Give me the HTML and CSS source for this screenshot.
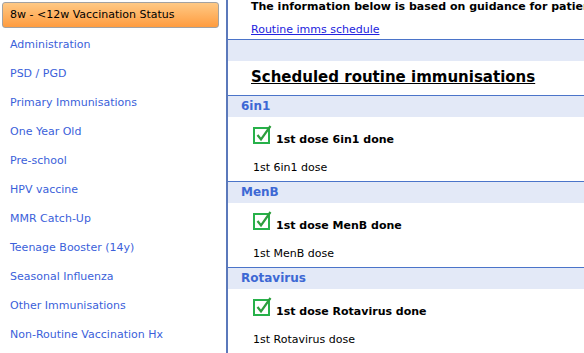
FILE: index.html
```html
<!DOCTYPE html>
<html>
<head>
    <title>Vaccination Status</title>
    <link rel="stylesheet" href="styles.css">
</head>
<body>

<div class="screen">

<div class="nav">
    <div class="nav-current">8w - &lt;12w Vaccination Status</div>
    <a class="nav-item" href="#">Administration</a>
    <a class="nav-item" href="#">PSD / PGD</a>
    <a class="nav-item" href="#">Primary Immunisations</a>
    <a class="nav-item" href="#">One Year Old</a>
    <a class="nav-item" href="#">Pre-school</a>
    <a class="nav-item" href="#">HPV vaccine</a>
    <a class="nav-item" href="#">MMR Catch-Up</a>
    <a class="nav-item" href="#">Teenage Booster (14y)</a>
    <a class="nav-item" href="#">Seasonal Influenza</a>
    <a class="nav-item" href="#">Other Immunisations</a>
    <a class="nav-item" href="#">Non-Routine Vaccination Hx</a>
</div>

<div class="main">

    <div class="intro">
        <p class="intro-text">The information below is based on guidance for patients born on or after 1st January 2020.</p>
        <a class="intro-link" href="#">Routine imms schedule</a>
    </div>

    <div class="band"></div>

    <h1 class="title">Scheduled routine immunisations</h1>

    <div class="section">
        <div class="section-head">6in1</div>
        <div class="section-body">
            <div class="check-row">
                <svg class="tick" width="19" height="19" viewBox="0 0 19 19"><rect x="1" y="3" width="15" height="15" fill="#fff" stroke="#27b14a" stroke-width="2"/><path d="M4.5 10 L8 14.5 L17.5 1" fill="none" stroke="#2e9e3e" stroke-width="2.2"/></svg>
                <span class="check-label">1st dose 6in1 done</span>
            </div>
            <div class="desc">1st 6in1 dose</div>
        </div>
    </div>

    <div class="section">
        <div class="section-head">MenB</div>
        <div class="section-body">
            <div class="check-row">
                <svg class="tick" width="19" height="19" viewBox="0 0 19 19"><rect x="1" y="3" width="15" height="15" fill="#fff" stroke="#27b14a" stroke-width="2"/><path d="M4.5 10 L8 14.5 L17.5 1" fill="none" stroke="#2e9e3e" stroke-width="2.2"/></svg>
                <span class="check-label">1st dose MenB done</span>
            </div>
            <div class="desc">1st MenB dose</div>
        </div>
    </div>

    <div class="section">
        <div class="section-head">Rotavirus</div>
        <div class="section-body">
            <div class="check-row">
                <svg class="tick" width="19" height="19" viewBox="0 0 19 19"><rect x="1" y="3" width="15" height="15" fill="#fff" stroke="#27b14a" stroke-width="2"/><path d="M4.5 10 L8 14.5 L17.5 1" fill="none" stroke="#2e9e3e" stroke-width="2.2"/></svg>
                <span class="check-label">1st dose Rotavirus done</span>
            </div>
            <div class="desc">1st Rotavirus dose</div>
        </div>
    </div>

</div>

</div>

</body>
</html>
```

FILE: styles.css
```css
BODY {
    margin : 0;
    background : #fff;
    font-family : "DejaVu Sans", verdana, sans-serif;
    font-size : 11px;
    overflow : hidden;
}

.screen {
    display : flex;
    height : 353px;
}

/* left navigation */
.nav {
    width : 226px;
    flex : none;
    padding-top : 2px;
}
.nav-current {
    margin : 0 7px 2px 2px;
    height : 24px;
    line-height : 24px;
    padding-left : 7px;
    border : 1px solid #a2a2a2;
    border-radius : 3px;
    background : linear-gradient(#ffc985, #ff9c3f);
    color : #000;
}
.nav-item {
    display : block;
    height : 29px;
    line-height : 29px;
    padding-left : 10px;
    color : #3b5fda;
    text-decoration : none;
}

/* right panel */
.main {
    flex : 1;
    min-width : 0;
    border-left : 2px solid #5b79bb;
    overflow : hidden;
    white-space : nowrap;
}
.intro {
    padding : 0 0 2px 23px;
    border-bottom : 1px solid #4b74c9;
}
.intro-text {
    margin : 0 0 9px 0;
    line-height : 14px;
    font-weight : bold;
    color : #000;
}
.intro-link {
    display : block;
    line-height : 14px;
    color : #2222dd;
}
.band {
    height : 21px;
    background : #e3e9f7;
}
.title {
    margin : 0;
    padding : 7px 0 8px 23px;
    font-size : 15px;
    line-height : 19px;
    font-weight : bold;
    text-decoration : underline;
    color : #000;
}

.section {
    border-top : 1px solid #4b74c9;
}
.section-head {
    height : 21px;
    line-height : 21px;
    padding-left : 13px;
    background : #e3e9f7;
    color : #3d68d4;
    font-size : 12px;
    font-weight : bold;
}
.section-body {
    height : 64px;
    padding-left : 25px;
    padding-top : 8px;
    box-sizing : border-box;
}
.check-row {
    display : flex;
    align-items : flex-end;
    height : 21px;
}
.tick {
    margin-bottom : 2px;
    margin-right : 4px;
}
.check-label {
    line-height : 14px;
    margin-bottom : -1px;
    font-weight : bold;
    color : #000;
}
.desc {
    margin-top : 15px;
    line-height : 14px;
    color : #000;
}
```
